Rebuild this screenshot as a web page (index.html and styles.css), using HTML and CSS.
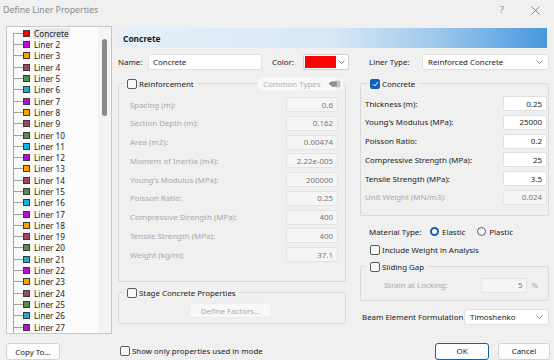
FILE: index.html
```html
<!DOCTYPE html>
<html>
<head>
<meta charset="utf-8">
<link rel="stylesheet" href="styles.css">
</head>
<body>
<div class="titlebar">
  <span class="title">Define Liner Properties</span>
  <span class="tb-help">?</span>
  <svg class="tb-close" width="9" height="9" viewBox="0 0 9 9"><path d="M0.5 0.5L8.5 8.5M8.5 0.5L0.5 8.5" stroke="#7a7a7a" stroke-width="0.9" fill="none"/></svg>
</div>
<div class="main">
  <div class="left">
    <div class="tree">
      <div class="tree-list">
        <div class="trow first"><span class="tl"></span><span class="sw c-red"></span><span class="tx sel">Concrete</span></div>
        <div class="trow"><span class="tl"></span><span class="sw c-pur"></span><span class="tx">Liner 2</span></div>
        <div class="trow"><span class="tl"></span><span class="sw c-ora"></span><span class="tx">Liner 3</span></div>
        <div class="trow"><span class="tl"></span><span class="sw c-mar"></span><span class="tx">Liner 4</span></div>
        <div class="trow"><span class="tl"></span><span class="sw c-gre"></span><span class="tx">Liner 5</span></div>
        <div class="trow"><span class="tl"></span><span class="sw c-cya"></span><span class="tx">Liner 6</span></div>
        <div class="trow"><span class="tl"></span><span class="sw c-pur"></span><span class="tx">Liner 7</span></div>
        <div class="trow"><span class="tl"></span><span class="sw c-ora"></span><span class="tx">Liner 8</span></div>
        <div class="trow"><span class="tl"></span><span class="sw c-mar"></span><span class="tx">Liner 9</span></div>
        <div class="trow"><span class="tl"></span><span class="sw c-gre"></span><span class="tx">Liner 10</span></div>
        <div class="trow"><span class="tl"></span><span class="sw c-cya"></span><span class="tx">Liner 11</span></div>
        <div class="trow"><span class="tl"></span><span class="sw c-pur"></span><span class="tx">Liner 12</span></div>
        <div class="trow"><span class="tl"></span><span class="sw c-ora"></span><span class="tx">Liner 13</span></div>
        <div class="trow"><span class="tl"></span><span class="sw c-mar"></span><span class="tx">Liner 14</span></div>
        <div class="trow"><span class="tl"></span><span class="sw c-gre"></span><span class="tx">Liner 15</span></div>
        <div class="trow"><span class="tl"></span><span class="sw c-cya"></span><span class="tx">Liner 16</span></div>
        <div class="trow"><span class="tl"></span><span class="sw c-pur"></span><span class="tx">Liner 17</span></div>
        <div class="trow"><span class="tl"></span><span class="sw c-ora"></span><span class="tx">Liner 18</span></div>
        <div class="trow"><span class="tl"></span><span class="sw c-mar"></span><span class="tx">Liner 19</span></div>
        <div class="trow"><span class="tl"></span><span class="sw c-gre"></span><span class="tx">Liner 20</span></div>
        <div class="trow"><span class="tl"></span><span class="sw c-cya"></span><span class="tx">Liner 21</span></div>
        <div class="trow"><span class="tl"></span><span class="sw c-pur"></span><span class="tx">Liner 22</span></div>
        <div class="trow"><span class="tl"></span><span class="sw c-ora"></span><span class="tx">Liner 23</span></div>
        <div class="trow"><span class="tl"></span><span class="sw c-mar"></span><span class="tx">Liner 24</span></div>
        <div class="trow"><span class="tl"></span><span class="sw c-gre"></span><span class="tx">Liner 25</span></div>
        <div class="trow"><span class="tl"></span><span class="sw c-cya"></span><span class="tx">Liner 26</span></div>
        <div class="trow"><span class="tl"></span><span class="sw c-pur"></span><span class="tx">Liner 27</span></div>
      </div>
      <div class="scroll"><div class="thumb"></div></div>
    </div>
    <div class="btn copy">Copy To...</div>
  </div>

  <div class="right">
    <div class="hdr">Concrete</div>
    <div class="cols">
      <div class="colL">
        <div class="name-row">
          <span class="lbl-name">Name:</span>
          <span class="txt name-input">Concrete</span>
          <span class="lbl-color">Color:</span>
          <span class="swatch"><span class="swatch-fill"></span><span class="swatch-arrow"><svg width="7" height="4" viewBox="0 0 7 4"><path d="M0.5 0.5L3.5 3.5L6.5 0.5" fill="none" stroke="#6a6a6a" stroke-width="0.8"/></svg></span></span>
        </div>

        <div class="group g-reinf">
          <div class="ghead">
            <span class="legend"><span class="cb"></span><span>Reinforcement</span></span>
            <span class="common">Common Types
              <svg width="13" height="8" viewBox="0 0 13 8"><rect x="7" y="0.5" width="5.5" height="7" rx="1" fill="#c4c4c4"/><path d="M0.5 3.2 L4 1.2 L8 1.6 L9 3 L8.5 6.5 L4 6.8 L2.5 5.2 Z" fill="#8e8e8e"/></svg>
            </span>
          </div>
          <div class="frows frows-l">
            <div class="frow dis"><span>Spacing (m):</span><span class="val">0.6</span></div>
            <div class="frow dis"><span>Section Depth (m):</span><span class="val">0.162</span></div>
            <div class="frow dis"><span>Area (m2):</span><span class="val">0.00474</span></div>
            <div class="frow dis"><span>Moment of Inertia (m4):</span><span class="val">2.22e-005</span></div>
            <div class="frow dis"><span>Young's Modulus (MPa):</span><span class="val">200000</span></div>
            <div class="frow dis"><span>Poisson Ratio:</span><span class="val">0.25</span></div>
            <div class="frow dis"><span>Compressive Strength (MPa):</span><span class="val">400</span></div>
            <div class="frow dis"><span>Tensile Strength (MPa):</span><span class="val">400</span></div>
            <div class="frow dis"><span>Weight (kg/m):</span><span class="val">37.1</span></div>
          </div>
        </div>

        <div class="group g-stage">
          <div class="ghead">
            <span class="legend"><span class="cb"></span><span>Stage Concrete Properties</span></span>
          </div>
          <div class="btn define">Define Factors...</div>
        </div>
      </div>

      <div class="colR">
        <div class="type-row">
          <span class="lbl-type">Liner Type:</span>
          <span class="select sel-type">Reinforced Concrete<svg width="7" height="4" viewBox="0 0 7 4"><path d="M0.5 0.5L3.5 3.5L6.5 0.5" fill="none" stroke="#6a6a6a" stroke-width="0.8"/></svg></span>
        </div>

        <div class="group g-conc">
          <div class="ghead">
            <span class="legend"><span class="cb on"><svg width="7" height="6" viewBox="0 0 7 6"><path d="M1 3.2L2.8 5L6 1" fill="none" stroke="#fff" stroke-width="1"/></svg></span><span>Concrete</span></span>
          </div>
          <div class="frows frows-r">
            <div class="frow"><span>Thickness (m):</span><span class="val en">0.25</span></div>
            <div class="frow"><span>Young's Modulus (MPa):</span><span class="val en">25000</span></div>
            <div class="frow"><span>Poisson Ratio:</span><span class="val en">0.2</span></div>
            <div class="frow"><span>Compressive Strength (MPa):</span><span class="val en">25</span></div>
            <div class="frow"><span>Tensile Strength (MPa):</span><span class="val en">3.5</span></div>
            <div class="frow dis"><span>Unit Weight (MN/m3):</span><span class="val">0.024</span></div>
          </div>
        </div>

        <div class="mat-row">
          <span class="lbl-mat">Material Type:</span>
          <span class="rb on"></span><span class="rb-t">Elastic</span>
          <span class="rb plastic"></span><span class="rb-t">Plastic</span>
        </div>
        <div class="inc-row"><span class="cb"></span><span>Include Weight in Analysis</span></div>

        <div class="group g-slide">
          <div class="ghead">
            <span class="legend"><span class="cb"></span><span>Sliding Gap</span></span>
          </div>
          <div class="strain-row dis">
            <span>Strain at Locking:</span>
            <span class="val strain">5</span>
            <span class="pct">%</span>
          </div>
        </div>

        <div class="beam-row">
          <span>Beam Element Formulation</span>
          <span class="select sel-beam">Timoshenko<svg width="7" height="4" viewBox="0 0 7 4"><path d="M0.5 0.5L3.5 3.5L6.5 0.5" fill="none" stroke="#6a6a6a" stroke-width="0.8"/></svg></span>
        </div>
      </div>
    </div>

    <div class="footer">
      <span class="cb"></span><span class="show-t">Show only properties used in mode</span>
      <span class="btn ok">OK</span>
      <span class="btn cancel">Cancel</span>
    </div>
  </div>
</div>
</body>
</html>
```

FILE: styles.css
```css
* { box-sizing: border-box; }
body {
  margin: 0;
  width: 554px;
  height: 360px;
  overflow: hidden;
  background: #f0f0f0;
  font-family: "Segoe UI", "Noto Sans", sans-serif;
  font-size: 7.9px;
  color: #1b1b1b;
  white-space: nowrap;
}
.titlebar {
  height: 26px;
  display: flex;
  align-items: flex-start;
  padding: 3px 14px 0 3px;
}
.title { font-size: 8.8px; line-height: 14px; color: #8a8a8a; }
.tb-help { margin-left: auto; font-size: 9px; line-height: 14px; color: #8a8a8a; }
.tb-close { margin-left: 27px; margin-top: 3px; }

.main { display: flex; height: 334px; }
.left { width: 112px; padding-left: 6px; display: flex; flex-direction: column; }
.tree {
  width: 106px;
  height: 308px;
  border: 1px solid #c8c8c8;
  background: #fbfbfb;
  display: flex;
  overflow: hidden;
}
.tree-list { flex: 1; padding-top: 0.7px; }
.trow { height: 11.3px; display: flex; align-items: center; }
.tl {
  width: 16px;
  align-self: stretch;
  background:
    linear-gradient(#a4a4a4, #a4a4a4) 6px 0 / 1px 100% no-repeat,
    linear-gradient(#a4a4a4, #a4a4a4) 6px 50% / 10px 1px no-repeat;
}
.trow.first .tl {
  background:
    linear-gradient(#a4a4a4, #a4a4a4) 6px 100% / 1px 50% no-repeat,
    linear-gradient(#a4a4a4, #a4a4a4) 6px 50% / 10px 1px no-repeat;
}
.sw { width: 7px; height: 7px; border: 1px solid #3a3a3a; flex: none; }
.c-red { background: #ff0000; }
.c-pur { background: #b80ed2; }
.c-ora { background: #ffa200; }
.c-mar { background: #a04763; }
.c-gre { background: #5b8c4b; }
.c-cya { background: #19b0d8; }
.tx { margin-left: 3px; padding: 0 1px; line-height: 11px; font-size: 8.2px; }
.tx.sel { background: #e6e6e6; }
.scroll { width: 13px; flex: none; padding: 12px 0 0 4px; background: #f4f4f4; }
.thumb { width: 5px; height: 77px; background: #8a8a8a; border-radius: 3px; }

.btn {
  display: flex;
  align-items: center;
  justify-content: center;
  background: #fdfdfd;
  border: 1px solid #d2d2d2;
  border-radius: 3px;
}
.copy { margin-top: 9px; width: 54px; height: 17px; }

.right { margin-left: 5px; width: 437px; display: flex; flex-direction: column; }
.hdr {
  margin-top: 2px;
  height: 20px;
  width: 430px;
  padding-left: 6px;
  display: flex;
  align-items: center;
  font-weight: bold;
  font-size: 8.4px;
  background: linear-gradient(to right, #e6eff8 0%, #d9e8f6 50%, #9cc7ec 75%, #4797dd 100%);
}
.cols { display: flex; margin-left: 1px; }
.colL { width: 231px; flex: none; }
.colR { margin-left: 11px; width: 189px; flex: none; }

.txt { background: #fff; border: 1px solid #e2e2e2; border-radius: 2px; display: flex; align-items: center; }
.name-row { margin-top: 6px; height: 16px; display: flex; align-items: center; }
.lbl-name { width: 30px; flex: none; }
.name-input { width: 114px; height: 16px; padding-left: 4px; flex: none; }
.lbl-color { margin-left: 10px; width: 31px; flex: none; }
.swatch {
  width: 46px; height: 16px; flex: none;
  background: #fff; border: 1px solid #cfcfcf; border-radius: 2px;
  display: flex; align-items: stretch; padding: 1px;
}
.swatch-fill { width: 31px; background: #ff0000; }
.swatch-arrow { flex: 1; display: flex; align-items: center; justify-content: center; }

.group { border: 1px solid #dadada; border-radius: 2px; }
.ghead { margin-top: -6px; height: 12px; display: flex; align-items: center; }
.legend { display: flex; align-items: center; gap: 2px; background: #f0f0f0; padding: 0 3px; }
.cb {
  width: 10px; height: 10px;
  border: 1px solid #5c5c5c; border-radius: 2px;
  background: #f8f8f8;
  display: flex; align-items: center; justify-content: center;
  flex: none;
}
.cb.on { background: #0f60b9; border-color: #0f60b9; }

.g-reinf { margin-top: 13px; width: 228px; padding-bottom: 19px; }
.g-reinf .legend { margin-left: 5px; }
.common {
  margin-left: auto; margin-right: 2px;
  width: 85px; height: 12px;
  background: #f8f8f8; border-radius: 3px;
  color: #b3b3b3;
  display: flex; align-items: center; justify-content: space-between;
  padding: 0 2px 0 5px;
}
.frows { display: flex; flex-direction: column; }
.frows-l { margin-top: 7px; gap: 3.75px; padding: 0 7px 0 11px; }
.frows-r { margin-top: 6px; gap: 3.8px; padding: 0 1px 0 4px; }
.frow { height: 15px; display: flex; align-items: center; justify-content: space-between; }
.dis { color: #a9a9a9; }
.val {
  height: 15px; flex: none;
  display: flex; align-items: center; justify-content: flex-end;
  padding-right: 4px;
  background: #f5f5f5; border: 1px solid #e4e4e4; border-radius: 2px;
  color: #777;
}
.frows-l .val { width: 52px; }
.frows-r .val { width: 44px; }
.val.en { background: #fff; border-color: #e0e0e0; color: #1b1b1b; }

.g-stage { margin-top: 10px; width: 228px; padding-bottom: 5px; }
.g-stage .legend { margin-left: 5px; }
.define { margin: 4px 0 0 70px; width: 83px; height: 15px; color: #a9a9a9; background: #f8f8f8; border-color: #ececec; }

.type-row { margin-top: 6px; height: 16px; display: flex; align-items: center; padding-left: 9px; }
.lbl-type { width: 53px; flex: none; }
.select {
  height: 16px; flex: none;
  background: #fff; border: 1px solid #e0e0e0; border-radius: 3px;
  display: flex; align-items: center; justify-content: space-between;
  padding: 0 5px 0 5px;
}
.sel-type { width: 127px; }
.g-conc { margin-top: 13px; padding-bottom: 10px; }
.g-conc .legend { margin-left: 6px; }

.mat-row { margin-top: 9px; height: 14px; display: flex; align-items: center; padding-left: 9px; }
.lbl-mat { width: 61px; flex: none; }
.rb {
  width: 9px; height: 9px; border-radius: 50%;
  border: 1px solid #5c5c5c; background: #f8f8f8; flex: none;
}
.rb.on { border: 2.5px solid #0f60b9; background: #fff; }
.rb-t { margin-left: 3px; }
.rb.plastic { margin-left: 12px; }

.inc-row { margin-top: 4px; height: 14px; display: flex; align-items: center; gap: 2px; padding-left: 10px; }

.g-slide { margin-top: 9px; padding-bottom: 7px; }
.g-slide .legend { margin-left: 6px; }
.strain-row { margin-top: 5px; height: 15px; display: flex; align-items: center; padding-left: 23px; }
.strain { margin-left: auto; width: 46px; }
.pct { margin: 0 10px 0 4px; }

.beam-row { margin-top: 8px; height: 16px; display: flex; align-items: center; justify-content: space-between; padding-left: 2px; }
.sel-beam { width: 85px; }

.footer { margin-top: 18px; height: 17px; display: flex; align-items: center; padding: 0 4px 0 3px; }
.show-t { margin-left: 2px; }
.ok { margin-left: auto; width: 54px; height: 17px; border-color: #0f60b9; background: #fdfdfd; }
.cancel { margin-left: 9px; width: 52px; height: 17px; }
```
